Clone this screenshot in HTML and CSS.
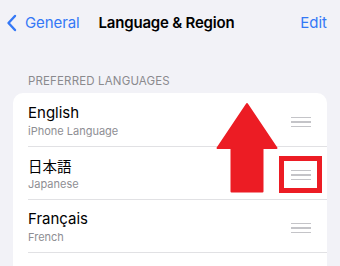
FILE: index.html
```html
<!DOCTYPE html>
<html lang="en">
<head>
<meta charset="utf-8">
<link rel="stylesheet" href="styles.css">
</head>
<body>
<div class="screen">
  <header class="nav">
    <a class="back">
      <svg class="chev" width="11" height="18" viewBox="0 0 11 18"><path d="M9 2 L2.5 9 L9 16" fill="none" stroke="#3478f6" stroke-width="2.4" stroke-linecap="round" stroke-linejoin="round"/></svg>
      <span>General</span>
    </a>
    <h1 class="title">Language &amp; Region</h1>
    <a class="edit">Edit</a>
  </header>

  <section class="group">
    <div class="group-label">PREFERRED LANGUAGES</div>
    <ul class="card">
      <li class="row">
        <div class="texts">
          <div class="name">English</div>
          <div class="sub">iPhone Language</div>
        </div>
        <span class="grip"><i></i><i></i><i></i></span>
      </li>
      <li class="row">
        <div class="texts">
          <div class="name jp">日本語</div>
          <div class="sub">Japanese</div>
        </div>
        <span class="grip"><i></i><i></i><i></i></span>
      </li>
      <li class="row">
        <div class="texts">
          <div class="name">Français</div>
          <div class="sub">French</div>
        </div>
        <span class="grip"><i></i><i></i><i></i></span>
      </li>
    </ul>
  </section>

  <svg class="annot" width="340" height="266" viewBox="0 0 340 266">
    <polygon points="247,104 217.5,148 231.5,148 231.5,191.5 262.5,191.5 262.5,148 276.5,148" fill="#ec1c24" stroke="#ec1c24" stroke-width="2" stroke-linejoin="round"/>
    <rect x="281.5" y="158.5" width="38" height="32" fill="none" stroke="#ec1c24" stroke-width="5"/>
  </svg>
</div>
</body>
</html>
```
FILE: styles.css
```css
* { box-sizing: border-box; }
html, body { margin: 0; padding: 0; }
body {
  background: #f2f2f7;
  font-family: "Inter", "Liberation Sans", "Noto Sans CJK JP", sans-serif;
  width: 340px;
  height: 266px;
  overflow: hidden;
}
.screen { position: relative; width: 340px; height: 266px; }

.nav {
  height: 45px;
  display: grid;
  grid-template-columns: 1fr auto 1fr;
  align-items: center;
  padding: 0 13px 0 6px;
}
.back {
  display: flex;
  align-items: center;
  gap: 8px;
  color: #3478f6;
  font-size: 15px;
  letter-spacing: -0.1px;
}
.chev { display: block; }
.title {
  margin: 0;
  font-size: 15px;
  font-weight: 600;
  color: #000;
  letter-spacing: -0.2px;
}
.edit {
  justify-self: end;
  color: #3478f6;
  font-size: 15px;
}

.group { padding: 0 13px; margin-top: 28px; }
.group-label {
  padding-left: 15px;
  font-size: 11.5px;
  line-height: 16px;
  color: #8a8a8e;
  letter-spacing: 0.15px;
  margin-bottom: 4px;
}
.card {
  list-style: none;
  margin: 0;
  padding: 0 0 30px;
  background: #fff;
  border-radius: 10px;
  overflow: hidden;
}
.row {
  display: flex;
  align-items: center;
  margin-left: 15px;
  padding: 9px 16px 7px 0;
  border-bottom: 1px solid #e1e1e4;
  height: 53px;
}
.row:first-child { height: 54px; padding-top: 10px; }
.texts { flex: 1; }
.name {
  font-size: 15px;
  line-height: 20px;
  color: #000;
}
.name.jp { font-family: "Noto Sans CJK JP", sans-serif; font-size: 14.5px; }
.sub {
  font-size: 11px;
  line-height: 16px;
  color: #8e8e93;
}
.grip {
  width: 20px;
  display: flex;
  flex-direction: column;
  gap: 3px;
  margin-top: 2px;
}
.grip i {
  display: block;
  height: 1.5px;
  background: #c4c4c8;
}

.annot { position: absolute; left: 0; top: 0; }
```
